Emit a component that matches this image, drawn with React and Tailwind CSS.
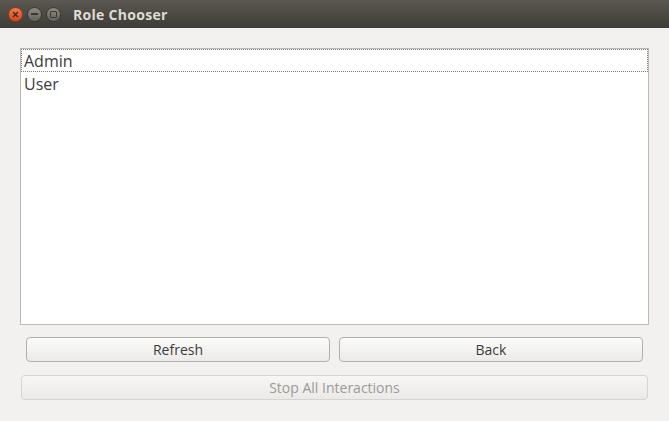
export default function App() {
  return (
    <div className="w-[669px] h-[421px] bg-[#f2f1f0] flex flex-col overflow-hidden" style={{ fontFamily: '"Open Sans", "Noto Sans", sans-serif' }}>
      {/* title bar */}
      <div className="h-[28px] shrink-0 bg-gradient-to-b from-[#5c5852] to-[#3d3c37] flex items-center pl-[8px]">
        <div className="w-[15px] h-[15px] rounded-full bg-gradient-to-b from-[#f37b4c] to-[#d8441b] border border-[#8e3a1e] flex items-center justify-center">
          <svg width="7" height="7" viewBox="0 0 7 7">
            <path d="M1 1 L6 6 M6 1 L1 6" stroke="#3b2a22" strokeWidth="1.4" />
          </svg>
        </div>
        <div className="ml-[4px] w-[15px] h-[15px] rounded-full bg-gradient-to-b from-[#8d8a84] to-[#66635e] border border-[#3a3834] flex items-center justify-center">
          <div className="w-[7px] h-[2px] bg-[#3a3834]" />
        </div>
        <div className="ml-[4px] w-[15px] h-[15px] rounded-full bg-gradient-to-b from-[#8d8a84] to-[#66635e] border border-[#3a3834] flex items-center justify-center">
          <div className="w-[7px] h-[7px] border border-[#3a3834] rounded-[1px]" />
        </div>
        <span className="ml-[12px] text-[14px] font-bold text-[#dfdbd2] tracking-[0.3px]">Role Chooser</span>
      </div>

      {/* content */}
      <div className="flex-1 flex flex-col px-[20px] pt-[20px]">
        <div className="h-[277px] bg-white border border-[#bcbab6] flex flex-col text-[16px] text-[#3c3c3c]">
          <div className="h-[23px] pl-[2px] border border-dotted border-[#7a7a7a] flex items-center">Admin</div>
          <div className="h-[23px] pl-[3px] flex items-center">User</div>
        </div>

        <div className="mt-[12px] px-[6px] flex gap-[9px]">
          <button className="flex-1 h-[25px] rounded-[4px] border border-[#b3b0ab] bg-gradient-to-b from-[#fbfbfa] to-[#ebeae8] text-[14px] text-[#3c3c3c]">Refresh</button>
          <button className="flex-1 h-[25px] rounded-[4px] border border-[#b3b0ab] bg-gradient-to-b from-[#fbfbfa] to-[#ebeae8] text-[14px] text-[#3c3c3c]">Back</button>
        </div>

        <div className="mt-[13px] px-[1px]">
          <button disabled className="w-full h-[25px] rounded-[4px] border border-[#d6d4d0] bg-gradient-to-b from-[#f6f6f5] to-[#eceae8] text-[14px] text-[#9c9a96]">Stop All Interactions</button>
        </div>
      </div>
    </div>
  );
}
